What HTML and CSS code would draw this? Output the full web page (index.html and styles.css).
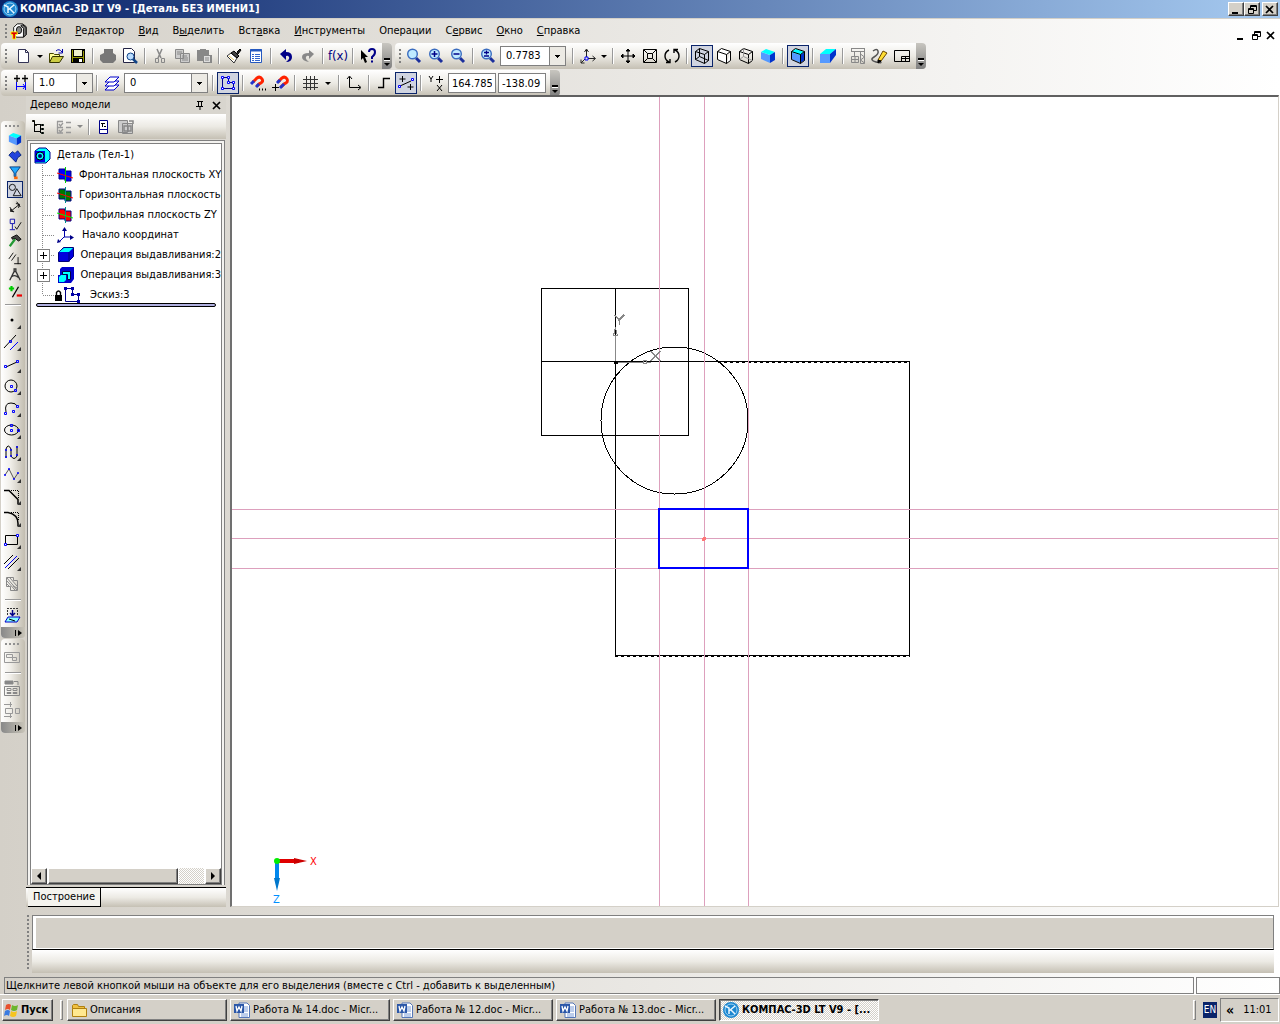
FILE: index.html
```html
<!DOCTYPE html>
<html lang="ru">
<head>
<meta charset="utf-8">
<title>КОМПАС-3D LT V9 - [Деталь БЕЗ ИМЕНИ1]</title>
<link rel="stylesheet" href="styles.css">
</head>
<body>
<svg class="defs" aria-hidden="true">
  <symbol id="kompas" viewBox="0 0 16 16"><circle cx="8" cy="8" r="8" fill="#1c86d0"/><circle cx="8" cy="8" r="6" fill="none" stroke="#9fd4f4"/><path d="M2 4l4 2v6M6 9l6-5M8 8l4 4" fill="none" stroke="#e8f6ff" stroke-width="1.500"/></symbol>
  <symbol id="word" viewBox="0 0 16 16"><path d="M5 1h8l2.500 2.500V15.500H5z" fill="#fff" stroke="#5577b8"/><path d="M10 5h4M10 7h4M10 9h4M7 12h7M7 14h7" stroke="#7a9cd8"/><rect y="2" width="10" height="9" fill="#2b57a8"/><path d="M2 4l1 5 2-4 2 4 1-5" fill="none" stroke="#fff" stroke-width="1.300"/></symbol>
  <symbol id="lens" viewBox="0 0 16 16"><path d="M10 10l4 4" stroke="#1c2f9c" stroke-width="3"/><circle cx="6.500" cy="6" r="4.800" fill="#bfeaff" stroke="#3a6cc0" stroke-width="1.400"/></symbol>
  <symbol id="plane" viewBox="0 0 16 16"><path d="M2 2h6v2h6v10H8v-2H2z" stroke="#008"/></symbol>
  <symbol id="cube" viewBox="0 0 16 16"><path d="M1 4l9 3v8l-9-4z" fill="#59f"/><path d="M1 4l5-3 9 3-5 3z" fill="#0ff"/><path d="M10 7l5-3v8l-5 3z" fill="#03c"/></symbol>
  <symbol id="min" viewBox="0 0 10 9"><path d="M1 7h6v2H1z" fill="#000"/></symbol>
  <symbol id="restore" viewBox="0 0 10 9"><path d="M3.500 3V.5h6v5H7M3 1.500h6M1.500 3.500h5v5h-5zM1 4.500h6" fill="none" stroke="#000"/></symbol>
  <symbol id="close" viewBox="0 0 10 9"><path d="M1 1l7 7M8 1l-7 7" stroke="#000" stroke-width="1.700"/></symbol>
</svg>

<header class="titlebar">
  <svg class="ic"><use href="#kompas"/></svg>
  <h1>КОМПАС-3D LT V9 - [Деталь БЕЗ ИМЕНИ1]</h1>
  <div class="winbtns">
    <button aria-label="Свернуть"><svg><use href="#min"/></svg></button><button aria-label="Восстановить"><svg><use href="#restore"/></svg></button><button class="gap" aria-label="Закрыть"><svg><use href="#close"/></svg></button>
  </div>
</header>

<nav class="menubar">
  <span class="grip"></span>
  <svg class="ic doc" viewBox="0 0 18 18"><path d="M3 5l4-4h6l4 3v9l-3 3H6l-3-4z" fill="#fff" stroke="#000"/><path d="M13 2l4 3v8l-3 3V6l-3-3z" fill="#777" stroke="#000"/><ellipse cx="9" cy="8" rx="3" ry="4" fill="#888" stroke="#000"/><path d="M0 10h7v3H5v5H2v-5H0z" fill="#d00" stroke="#ff0"/></svg>
  <button><u>Ф</u>айл</button><button><u>Р</u>едактор</button><button><u>В</u>ид</button><button>В<u>ы</u>делить</button><button>Вст<u>а</u>вка</button><button><u>И</u>нструменты</button><button>Операции</button><button>С<u>е</u>рвис</button><button><u>О</u>кно</button><button><u>С</u>правка</button>
  <div class="mdibtns">
    <button aria-label="Свернуть окно"><svg><use href="#min"/></svg></button><button aria-label="Восстановить окно"><svg><use href="#restore"/></svg></button><button aria-label="Закрыть окно"><svg><use href="#close"/></svg></button>
  </div>
</nav>

<div class="toolrow">
  <div class="toolbar standard" role="toolbar" aria-label="Стандартная">
    <span class="grip"></span>
    <button class="tb" aria-label="Создать"><svg class="ic" viewBox="0 0 16 16"><path d="M3.500 1.500h7l3 3v10h-10z" fill="#fff" stroke="#335"/><path d="M10.500 1.500v3h3" stroke="#335"/></svg></button>
    <button class="drop" aria-label="Список"></button>
    <button class="tb" aria-label="Открыть"><svg class="ic" viewBox="0 0 16 16"><path d="M1.500 14V5.500h4l1 1h5V9" fill="#ff9" stroke="#440"/><path d="M1.500 14.500l3-6h11l-4 6z" fill="#cc4" stroke="#330"/><path d="M8 3q3-3 6 1M14.500 1v4h-4" stroke="#00a"/></svg></button>
    <button class="tb" aria-label="Сохранить"><svg class="ic px" viewBox="0 0 16 16"><path d="M1 1h14v14H1z" fill="#000"/><path d="M4 2h8v6H4z" fill="#eec"/><path d="M2 2h1v12H2zM13 3h1v11h-1zM3 9h10v1H3z" fill="#990"/><path d="M9 11h3v3H9z" fill="#fff"/></svg></button>
    <i class="sep"></i>
    <button class="tb" aria-label="Печать"><svg class="ic" viewBox="0 0 16 16"><path d="M4 1h9v4l3 2v5l-3 3H3l-3-3V7l4-2z" fill="#777"/></svg></button>
    <button class="tb" aria-label="Предварительный просмотр"><svg class="ic" viewBox="0 0 16 16"><path d="M1.500.5h8l3 3v11h-11z" fill="#fff" stroke="#224"/><circle cx="8.500" cy="8.500" r="3.500" fill="#bdf" stroke="#148"/><path d="M11 11l4 4" stroke="#148" stroke-width="2.500"/></svg></button>
    <i class="sep"></i>
    <button class="tb" aria-label="Вырезать"><svg class="ic" viewBox="0 0 16 16" stroke="#888"><path d="M5 1l4 9M10 1L6 10" stroke-width="1.500"/><path d="M3.500 10.500h3v4h-3zM9.500 10.500h3v4h-3z"/></svg></button>
    <button class="tb" aria-label="Копировать"><svg class="ic" viewBox="0 0 16 16" stroke="#888"><path d="M1.500 1.500h8v9h-8zM6.500 5.500h9v9h-9z" fill="#ccc"/><path d="M3 4h5M3 6h3M8 8h5M8 10h6M8 12h6"/></svg></button>
    <button class="tb" aria-label="Вставить"><svg class="ic" viewBox="0 0 16 16"><path d="M1 2h3V1h6v1h3v5h3v8H7v-2H1z" fill="#888"/><path d="M8 8h6v6H8z" fill="#ddd"/><path d="M9 10h4M9 12h4" stroke="#888"/></svg></button>
    <i class="sep"></i>
    <button class="tb" aria-label="Копировать свойства"><svg class="ic" viewBox="0 0 16 16"><path d="M11 4l3-3 1 1-3 4z" fill="#222" stroke="#000"/><path d="M5 5l6 5-3 5-7-7z" fill="#fff" stroke="#333"/><path d="M8 3l5 5-2 2-6-5z" fill="#444" stroke="#000"/><path d="M3 8l5 4" stroke="#e8c860"/></svg></button>
    <button class="tb" aria-label="Свойства"><svg class="ic" viewBox="0 0 16 16"><path d="M2.500 1.500h11v13h-11z" fill="#fff" stroke="#2458c0"/><path d="M2 2.500h12" stroke="#2458c0" stroke-width="2"/><path d="M4 6.500h2M7 6.500h5M4 8.500h2M7 8.500h5M4 10.500h2M7 10.500h5M4 12.500h2M7 12.500h5" stroke="#36c"/></svg></button>
    <i class="sep"></i>
    <button class="tb" aria-label="Отменить"><svg class="ic" viewBox="0 0 16 16"><path d="M2 6l6-5v3q6 0 6 5t-6 5q4-3 3-5t-3-1v4z" fill="#008"/></svg></button>
    <button class="tb" aria-label="Повторить"><svg class="ic" viewBox="0 0 16 16"><path d="M14 6L9 2v3q-7 0-7 4t7 5q-4-3-3-5t3-1v3z" fill="#888"/></svg></button>
    <i class="sep"></i>
    <button class="tb fx" aria-label="Переменные">f(x)</button>
    <i class="sep"></i>
    <button class="tb" aria-label="Справка"><svg class="ic" viewBox="0 0 16 16"><path d="M1 2l7 7H5l2 5-2 1-2-5-2 2z" fill="#000"/><path d="M9 4q0-3 3-3t3 3-3 5v2M12 12.500v2" stroke="#008" stroke-width="2"/></svg></button>
    <button class="cap" aria-label="Параметры панели"></button>
  </div>
  <div class="toolbar view" role="toolbar" aria-label="Вид">
    <span class="grip"></span>
    <button class="tb" aria-label="Увеличить рамкой"><svg class="ic"><use href="#lens"/></svg></button>
    <button class="tb" aria-label="Увеличить"><svg class="ic" viewBox="0 0 16 16"><use href="#lens"/><path d="M6.500 3v6M3.500 6h6" stroke="#008" stroke-width="1.500"/></svg></button>
    <button class="tb" aria-label="Уменьшить"><svg class="ic" viewBox="0 0 16 16"><use href="#lens"/><path d="M3.500 6h6" stroke="#008" stroke-width="1.500"/></svg></button>
    <i class="sep"></i>
    <button class="tb" aria-label="Масштаб"><svg class="ic" viewBox="0 0 16 16"><use href="#lens"/><path d="M6.500 2.500v4M4 4.500h5M4 8h5" stroke="#008" stroke-width="1.300"/></svg></button>
    <span class="combo zoom"><select aria-label="Текущий масштаб"><option>0.7783</option></select></span>
    <i class="sep"></i>
    <button class="tb" aria-label="Ориентация"><svg class="ic" viewBox="0 0 16 16"><path d="M6.500 9V2M8 10.500h7M5 11l-4 4M4.500 4l2-3 2 3M12.500 8l3 2.500-3 2.500M1 11.500V15h3.500" stroke="#222"/><path d="M5 9h3v3H5z" stroke="#00f"/></svg></button>
    <button class="drop" aria-label="Список ориентаций"></button>
    <i class="sep"></i>
    <button class="tb" aria-label="Сдвинуть"><svg class="ic" viewBox="0 0 16 16" stroke="#000"><path d="M8 2v12M2 8h12"/><path d="M6 3l2-2 2 2zM6 13l2 2 2-2zM3 6L1 8l2 2zM13 6l2 2-2 2z" fill="#000"/></svg></button>
    <button class="tb" aria-label="Показать все"><svg class="ic" viewBox="0 0 16 16" stroke="#000"><path d="M1.500 1.500h13v13h-13zM5.500 5.500h5v5h-5zM2 2l3.500 3.500M14 2l-3.500 3.500M2 14l3.500-3.500M14 14l-3.500-3.500"/></svg></button>
    <button class="tb" aria-label="Повернуть"><svg class="ic" viewBox="0 0 16 16" stroke="#000" stroke-width="1.400"><path d="M5 2Q1 4 1 8t4 6M2 14.500h4V11M11 14q4-2 4-6t-4-6M14 1.500h-4V5"/></svg></button>
    <i class="sep"></i>
    <button class="tb on" aria-label="Каркас"><svg class="ic" viewBox="0 0 16 16" stroke="#000"><path d="M1.500 3.500l9 3v9l-9-4zM1.500 3.500l4-3 9 3-4 3M14.500 3.500v9l-4 3M5.500.5v8l9 4M1.500 11.500l4-3"/></svg></button>
    <button class="tb" aria-label="Без невидимых линий"><svg class="ic" viewBox="0 0 16 16" stroke="#000"><path d="M1.500 3.500l9 3v9l-9-4zM1.500 3.500l4-3 9 3-4 3M14.500 3.500v9l-4 3" fill="#fff"/></svg></button>
    <button class="tb" aria-label="Невидимые линии тонкие"><svg class="ic" viewBox="0 0 16 16" stroke="#000"><path d="M1.500 3.500l9 3v9l-9-4zM1.500 3.500l4-3 9 3-4 3M14.500 3.500v9l-4 3"/><path d="M5.500.5v8l9 4M1.500 11.500l4-3" stroke="#999"/></svg></button>
    <button class="tb" aria-label="Полутоновое"><svg class="ic"><use href="#cube"/></svg></button>
    <i class="sep"></i>
    <button class="tb on" aria-label="Полутоновое с каркасом"><svg class="ic" viewBox="0 0 16 16"><use href="#cube"/><path d="M1.500 3.500l9 3v9l-9-4zM1.500 3.500l4-3 9 3-4 3M14.500 3.500v9l-4 3" stroke="#000"/></svg></button>
    <i class="sep"></i>
    <button class="tb" aria-label="Перспектива"><svg class="ic" viewBox="0 0 16 16"><path d="M0 6h10v9H0z" fill="#59f"/><path d="M0 6l6-5h10l-6 5z" fill="#0ff"/><path d="M10 6l6-5v6l-6 8z" fill="#03c"/></svg></button>
    <i class="sep"></i>
    <button class="tb" aria-label="Библиотека"><svg class="ic" viewBox="0 0 16 16" stroke="#888"><path d="M1 .5h14M1 3.500h14M1.500 1v3M14.500 1v3M4.500 4v4M10.500 4v11.500h4V4M10.500 6l4 3-4 3 4 3M1.500 8.500h7v6h-7zM5 8v6M1 11.500h7"/></svg></button>
    <button class="tb" aria-label="Перестроить"><svg class="ic" viewBox="0 0 16 16"><path d="M1 3q4-3 5 0T2 9t2 5 4-1" stroke="#555" stroke-width="1.500"/><path d="M6 12l5-9 4 2-6 8z" fill="#fd3" stroke="#640"/><path d="M6 12l3 1-3 2z" fill="#000" stroke="#000"/></svg></button>
    <button class="tb" aria-label="Окно"><svg class="ic" viewBox="0 0 16 16" stroke="#000"><path d="M.5 2.500h15v11H.5zM7.500 8.500h8v5h-8zM8 10.500h7M11.500 9v4"/></svg></button>
    <button class="cap" aria-label="Параметры панели"></button>
  </div>
</div>

<div class="toolrow">
  <div class="toolbar second" role="toolbar" aria-label="Текущее состояние">
    <span class="grip"></span>
    <label class="tb" for="step"><svg class="ic" viewBox="0 0 16 16"><path d="M4 0v7M1 3.500h6M12 0v7M9 3.500h6" stroke="#000" stroke-width="1.300"/><path d="M3.500 7v8M12.500 7v8M4 11.500h8M10 9l2 2.500-2 2.500" stroke="#00f"/></svg></label>
    <span class="combo step"><select id="step"><option>1.0</option></select></span>
    <i class="sep"></i>
    <label class="tb" for="layer"><svg class="ic" viewBox="0 0 16 16" stroke="#00c"><path d="M1 15l5-5h9l-5 5z" fill="#fff"/><path d="M1 11l5-5h9l-5 5z" fill="#fff"/><path d="M1 7l5-5h9l-5 5z" fill="#fff"/></svg></label>
    <span class="combo layer"><select id="layer"><option>0</option></select></span>
    <i class="sep"></i>
    <button class="tb on" aria-label="Эскиз"><svg class="ic" viewBox="0 0 16 16"><path d="M2.500 2.500h6v5h5v6h-11z" stroke="#008"/><path d="M1.500 1.500h2v2h-2zM7.500 1.500h2v2h-2zM7.500 6.500h2v2h-2zM12.500 6.500h2v2h-2zM12.500 12.500h2v2h-2zM1.500 12.500h2v2h-2z" stroke="#00f" fill="#fff"/></svg></button>
    <i class="sep"></i>
    <button class="tb" aria-label="Привязки"><svg class="ic" viewBox="0 0 16 16"><path d="M3 7l4-4q3-2 5 1t-3 5l-2 2" stroke="#f20" stroke-width="3"/><path d="M1 9l3-3M6 12l3-3" stroke="#23c" stroke-width="3"/><path d="M9 14.500h1M12 14.500h1M15 14.500h1" stroke="#000" stroke-width="2"/></svg></button>
    <button class="tb" aria-label="Запретить привязки"><svg class="ic" viewBox="0 0 16 16"><path d="M6 7l4-4q3-2 5 1t-3 5l-3 3" stroke="#f20" stroke-width="3"/><path d="M5 8l3-3M8 13l4-4" stroke="#23c" stroke-width="3"/><path d="M3.500 9v7M0 12.500h7" stroke="#000"/></svg></button>
    <i class="sep"></i>
    <button class="tb" aria-label="Сетка"><svg class="ic px" viewBox="0 0 16 16" stroke="#333"><path d="M4.500 1v14M8.500 1v14M12.500 1v14M1 4.500h15M1 8.500h15M1 12.500h15"/></svg></button>
    <button class="drop" aria-label="Настройка сетки"></button>
    <i class="sep"></i>
    <button class="tb" aria-label="Локальная СК"><svg class="ic" viewBox="0 0 16 16" stroke="#000"><path d="M3.500 2v10.500H14M1 4l2.500-3L6 4M12 10l3 2.500-3 2.500"/></svg></button>
    <i class="sep"></i>
    <button class="tb" aria-label="Ортогональное черчение"><svg class="ic" viewBox="0 0 16 16" stroke="#000"><path d="M2 12.500h5.500v-9H14" stroke-width="1.400"/></svg></button>
    <button class="tb on" aria-label="Округление"><svg class="ic" viewBox="0 0 16 16"><path d="M4.500 1v6M1.500 4h6M12.500 9v6M9.500 12h6M2 11l11-5" stroke="#000"/><path d="M.5 10.500h2v2h-2zM13.500 3.500h2v2h-2z" stroke="#00f" fill="#fff"/></svg></button>
    <i class="sep"></i>
    <span class="tb"><svg class="ic" viewBox="0 0 16 16" stroke="#000"><path d="M1 1l2 3 2-3M3 4v3M11.500 1v7M8 4.500h7M9 10l5 6M14 10l-5 6"/></svg></span>
    <input class="coord" aria-label="Координата X" value="164.785"><input class="coord" aria-label="Координата Y" value="-138.09">
    <button class="cap" aria-label="Параметры панели"></button>
  </div>
</div>

<main class="work">
  <aside class="rail" aria-label="Компактная панель">
    <div class="strip">
      <span class="hgrip"></span>
      <div class="modes">
        <button aria-label="Деталь"><svg class="ic"><use href="#cube"/></svg></button>
        <button aria-label="Поверхности"><svg class="ic" viewBox="0 0 16 16"><path d="M1 7l4-4 3 2 3-3 4 5-4 3-2 5-4-4z" fill="#24d" stroke="#027"/></svg></button>
        <button aria-label="Фильтры"><svg class="ic" viewBox="0 0 16 16"><path d="M2 1h12L9 8v4H7V8z" fill="#2af" stroke="#037"/><path d="M7 12h4v3H7z" fill="#f60"/></svg></button>
        <button class="on" aria-label="Геометрия"><svg class="ic" viewBox="0 0 16 16" stroke="#000"><circle cx="5" cy="5" r="3.500"/><path d="M6 14.500l4-8 5 8z"/></svg></button>
        <button aria-label="Размеры"><svg class="ic" viewBox="0 0 16 16" stroke="#000"><path d="M3 13L13 5M2 8l4 6M10 2l4 6M3 10v3h4M9 4l4 1-1 4"/></svg></button>
        <button aria-label="Обозначения"><svg class="ic" viewBox="0 0 16 16"><path d="M2.500 2.500h5v5h-5zM5 8v6M2 14.500h6" stroke="#00a"/><path d="M8 11l2 3 5-8" stroke="#000"/></svg></button>
        <button aria-label="Редактирование"><svg class="ic" viewBox="0 0 16 16"><path d="M4 4l6-3 5 5-3 2-4-3-3 1z" fill="#444" stroke="#000"/><path d="M8 6l-6 8" stroke="#293" stroke-width="2.500"/></svg></button>
        <button aria-label="Параметризация"><svg class="ic" viewBox="0 0 16 16" stroke="#000"><path d="M1 9l5-7M4 11l5-7M7 14.500h8M11.500 7v8"/></svg></button>
        <button aria-label="Измерения"><svg class="ic" viewBox="0 0 16 16" stroke="#333" stroke-width="1.500"><path d="M2 14l5-10h2l5 10M7 4V1h2v3M4 10q4-3 8 1"/></svg></button>
        <button aria-label="Выделение"><svg class="ic" viewBox="0 0 16 16"><path d="M4 1v6M1 4h6" stroke="#0c0" stroke-width="2.500"/><path d="M12 2L5 14" stroke="#000" stroke-width="1.500"/><path d="M10 12h6" stroke="#e00" stroke-width="2.500"/></svg></button>
      </div>
      <i class="hsep"></i>
      <div class="tools">
        <button class="more" aria-label="Точка"><svg class="ic" viewBox="0 0 16 16"><circle cx="8" cy="8" r="1.500" fill="#000"/></svg></button>
        <button class="more" aria-label="Вспомогательная прямая"><svg class="ic" viewBox="0 0 16 16"><path d="M0 14L12 1" stroke="#000"/><path d="M6 16l8-8M5.500 6.500h2v2h-2z" stroke="#00f"/></svg></button>
        <button class="more" aria-label="Отрезок"><svg class="ic" viewBox="0 0 16 16"><path d="M2 11l11-5" stroke="#000"/><path d="M.5 9.500h2v2h-2zM12.500 4.500h2v2h-2z" stroke="#00f"/></svg></button>
        <button class="more" aria-label="Окружность"><svg class="ic" viewBox="0 0 16 16"><circle cx="7" cy="8" r="6" stroke="#000"/><path d="M6.500 7.500h2v2h-2zM10.500 11.500h2v2h-2z" stroke="#00f"/></svg></button>
        <button class="more" aria-label="Дуга"><svg class="ic" viewBox="0 0 16 16"><path d="M2 12Q0 3 7 3q5 0 6 3" stroke="#000"/><path d="M.5 12.500h2v2h-2zM8.500 10.500h2v2h-2zM12.500 5.500h2v2h-2z" stroke="#00f"/></svg></button>
        <button class="more" aria-label="Эллипс"><svg class="ic" viewBox="0 0 16 16"><ellipse cx="7.500" cy="8" rx="7" ry="5" stroke="#000"/><path d="M6.500 2.500h2v2h-2zM6.500 7.500h2v2h-2zM13.500 7.500h2v2h-2z" stroke="#00f"/></svg></button>
        <button class="more" aria-label="Непрерывный ввод"><svg class="ic" viewBox="0 0 16 16"><path d="M2 14V5q2-6 5 0v7q3 5 6 0V2" stroke="#000"/><path d="M1.500 5.500h1v1h-1zM1.500 12.500h1v1h-1zM6.500 5.500h1v1h-1zM6.500 11.500h1v1h-1zM12.500 2.500h1v1h-1zM12.500 10.500h1v1h-1z" stroke="#00f"/></svg></button>
        <button class="more" aria-label="Кривая"><svg class="ic" viewBox="0 0 16 16"><path d="M1 9l4-6 5 10 4-6" stroke="#555"/><path d="M.5 8.500h1v1h-1zM4.500 2.500h1v1h-1zM9.500 12.500h1v1h-1zM13.500 6.500h1v1h-1z" stroke="#00f"/></svg></button>
        <button class="more" aria-label="Фаска"><svg class="ic" viewBox="0 0 16 16"><path d="M0 2.500h5l9 9V16" stroke="#000" stroke-width="1.500"/><path d="M7 2.500h7.500V10" stroke="#000" stroke-dasharray="1 1"/></svg></button>
        <button class="more" aria-label="Скругление"><svg class="ic" viewBox="0 0 16 16"><path d="M0 2.500h4q10 2 10 11V16" stroke="#000" stroke-width="1.500"/><path d="M7 2.500h7.500V10" stroke="#000" stroke-dasharray="1 1"/></svg></button>
        <button class="more" aria-label="Прямоугольник"><svg class="ic" viewBox="0 0 16 16"><path d="M1.500 3.500h12v9h-12z" stroke="#000"/><path d="M.5 11.500h2v2h-2zM12.500 2.500h2v2h-2z" stroke="#00f" fill="#fff"/></svg></button>
        <button class="more" aria-label="Штриховка линиями"><svg class="ic" viewBox="0 0 16 16"><path d="M0 10l9-9M4 15L15 4" stroke="#000"/><path d="M1 14L13 2" stroke="#00f"/></svg></button>
        <button aria-label="Штриховка"><svg class="ic" viewBox="0 0 16 16" stroke="#888"><path d="M2.500 1.500h7v3h4v10h-7v-4h-4zM3 2l10 12M3 5l8 9M6 2l7 8M3 8l3 3M9 10l4 2"/></svg></button>
        <i class="hsep"></i>
        <button aria-label="Спроецировать объект"><svg class="ic" viewBox="0 0 16 16"><path d="M3 1.500h11M3.500 3v5M13.500 3v5" stroke="#333" stroke-dasharray="2 1"/><path d="M8.500 3v5M6 6l2.500 2.500L11 6" stroke="#008" stroke-width="1.500"/><path d="M1 15l3-5h12l-3 5z" fill="#8ff" stroke="#00c"/><path d="M5 12l6 2" stroke="#000"/></svg></button>
      </div>
      <button class="hcap" aria-label="Развернуть панель"></button>
    </div>
    <div class="strip">
      <span class="hgrip"></span>
      <div class="tools">
        <button aria-label="Вид"><svg class="ic" viewBox="0 0 16 16" stroke="#999"><path d="M.5 3.500h15v10H.5zM2.500 5.500h6v3h-6zM8.500 8.500h4v3h-4z"/></svg></button>
        <i class="hsep"></i>
        <button aria-label="Спецификация"><svg class="ic" viewBox="0 0 16 16" stroke="#888"><path d="M1 1h8v3H1z" fill="#888"/><path d="M10 1.500h4V5M.5 6.500h15v9H.5zM3 8.500h4v2H3zM9 8.500h4v2H9zM3 12.500h4v1H3zM9 12.500h4v1H9z"/></svg></button>
        <button aria-label="Размещение"><svg class="ic" viewBox="0 0 16 16" stroke="#999"><path d="M0 2.500h8M6.500 0v5M1.500 6.500h7v5h-7zM11.500 6.500h4v5h-4zM0 14.500h8M6.500 12v4"/></svg></button>
      </div>
      <button class="hcap" aria-label="Развернуть панель"></button>
    </div>
  </aside>

  <section class="panel">
    <header class="panelhead"><h2>Дерево модели</h2>
      <button aria-label="Закрепить"><svg viewBox="0 0 10 9"><path d="M2 .5h6M3.500 0v5M6.500 0v5M1 5.500h7M5 5v4" fill="none" stroke="#000"/><path d="M6 0h1v5H6z"/></svg></button><button aria-label="Закрыть панель"><svg><use href="#close"/></svg></button>
    </header>
    <div class="paneltools">
      <button class="tb" aria-label="Структура"><svg class="ic" viewBox="0 0 16 16" stroke="#000"><path d="M3.500 2v11M4 5.500h5M4 12.500h5M9.500 5v9"/><path d="M1.500 1.500h2v1h-2zM4.500 5.500h1v1h-1z" fill="#cc0"/><path d="M10.500 5.500h2v1h-2zM10.500 9.500h2v1h-2zM10.500 13.500h2v1h-2z" fill="#0c9"/></svg></button>
      <button class="tb" aria-label="Состав"><svg class="ic" viewBox="0 0 16 16" stroke="#999"><path d="M1 2.500h6M1.500 2v12M1 8.500h6M1 14h6M3 5l1.500 2L7 4M3 11l1.500 2L7 10M10 3.500h5M10 8.500h5M10 13.500h5" stroke-width="1.300"/></svg></button>
      <button class="drop dim" aria-label="Список состава"></button>
      <i class="sep"></i>
      <button class="tb" aria-label="Отношения"><svg class="ic" viewBox="0 0 16 16"><path d="M3.500 1.500h8v13h-8zM3 10.500h9" fill="#fff" stroke="#008"/><path d="M5 4.500h4M6.500 4v4M8 7.500h2" stroke="#000"/></svg></button>
      <button class="tb" aria-label="Дополнительное окно"><svg class="ic" viewBox="0 0 16 16" stroke="#888"><path d="M.5 1.500h9v12h-9zM4.500 4.500h10v10h-10z" fill="#ccc"/><path d="M6 7h7v5H6zM10 7v6M11 2h4v3" stroke-width="1.500"/></svg></button>
    </div>
    <div class="treebox">
      <ul class="tree">
        <li class="root"><svg class="ic" viewBox="0 0 16 16"><path d="M1 4l4-3h7l4 4v7l-4 4H1z" fill="#0ff" stroke="#008"/><path d="M1 4h10v11H1z" fill="#00d"/><circle cx="6" cy="9" r="4" fill="#0ff" stroke="#000"/><circle cx="6" cy="9" r="2" fill="#007"/></svg><span>Деталь (Тел-1)</span></li>
        <li><svg class="ic" viewBox="0 0 16 16"><use href="#plane" fill="#00f"/><path d="M8.500 0v16" stroke="#0c0"/><path d="M0 6l16 5" stroke="#f00"/></svg><span>Фронтальная плоскость XY</span></li>
        <li><svg class="ic" viewBox="0 0 16 16"><use href="#plane" fill="#070"/><path d="M8.500 0v16" stroke="#088"/><path d="M0 6l16 5" stroke="#f00"/></svg><span>Горизонтальная плоскость</span></li>
        <li><svg class="ic" viewBox="0 0 16 16"><use href="#plane" fill="#f00"/><path d="M8.500 0v16" stroke="#088"/><path d="M0 6l16 5" stroke="#0e0"/></svg><span>Профильная плоскость ZY</span></li>
        <li><svg class="ic" viewBox="0 0 16 16"><path d="M7.500 10V2M7 10h7M7 10l-5 5" stroke="#00a"/><path d="M5 4l2.500-4L10 4zM13 8l4 2.500-4 2.500zM0 16l1-4 3 3z" fill="#008"/></svg><span class="in">Начало координат</span></li>
        <li class="node"><svg class="ic" viewBox="0 0 16 16"><path d="M.5 5.500l5-5h10v9l-5 5H.5z" fill="#00d" stroke="#007"/><path d="M1 5l5-4h9l-4 4z" fill="#0ff"/><path d="M11 5v10" stroke="#007"/></svg><span>Операция выдавливания:2</span></li>
        <li class="node"><svg class="ic" viewBox="0 0 16 16"><path d="M2 2l2-2h12v12l-3 4H0V8h2z" fill="#00c"/><path d="M4.500 4.500h8v8h-3v-5h-5z" fill="#0ff" stroke="#004"/><path d="M1 10l2-2h5v5l-2 2H1z" fill="#0ff"/></svg><span>Операция выдавливания:3</span></li>
        <li class="last"><svg class="lock" viewBox="0 0 7 11"><path d="M1.500 5V2.500q2-3 4 0V5" fill="none" stroke="#000" stroke-width="1.400"/><path d="M0 5h7v6H0z"/></svg><svg class="ic" viewBox="0 0 16 16" stroke="#008"><path d="M1.500 1.500h7v6h6v7h-13z"/><path d="M0 0h3v3H0zM7 0h3v3H7zM7 6h3v3H7zM13 6h3v3h-3zM13 13h3v3h-3z" fill="#00a" stroke="none"/></svg><span class="far">Эскиз:3</span></li>
      </ul>
      <div class="treerest"><div class="endbar"></div></div>
      <div class="hscroll"><button class="left" aria-label="Влево"></button><span class="thumb"></span><span class="track"></span><button class="right" aria-label="Вправо"></button></div>
    </div>
    <div class="tabs"><button>Построение</button></div>
  </section>

  <section class="canvas" aria-label="Окно модели">
    <svg class="drawing px">
      <g transform="translate(-232 -97)" fill="none">
        <path d="M541.500 288.500h147v147h-147zM615.500 288v368M541 361.500h368.500V655.500H615" stroke="#000"/>
        <path d="M718 362.500h192M615 656.500h295" stroke="#000" stroke-dasharray="3 3"/>
        <circle cx="674.500" cy="420.500" r="73.500" stroke="#000"/>
        <g stroke="#dda0bd">
          <line x1="232" x2="200%" y1="509.500" y2="509.500"/><line x1="232" x2="200%" y1="538.500" y2="538.500"/><line x1="232" x2="200%" y1="568.500" y2="568.500"/>
          <line y1="97" y2="200%" x1="659.500" x2="659.500"/><line y1="97" y2="200%" x1="704.500" x2="704.500"/><line y1="97" y2="200%" x1="748.500" x2="748.500"/>
        </g>
        <rect x="659" y="509" width="89" height="59" stroke="#00f" stroke-width="2"/>
        <circle cx="704" cy="539" r="2" fill="#f77"/>
        <path d="M615.500 362v-27M613.500 335.500l2-8 2 8zM616 362.500h28M643.500 360.500h3v3h-3zM646 362.500h5" stroke="#888"/>
        <path d="M615 315l4 5 5-5M619.500 320v5M651 351l9 10M660 351l-9 10" stroke="#888" stroke-width="1.500"/>
        <path d="M614 361h4v3h-4z" fill="#000"/>
      </g>
    </svg>
    <svg class="triad" viewBox="0 0 50 52"><path d="M5 6h22" stroke="#e00000" stroke-width="4"/><path d="M22 3l13 3-13 3z" fill="#c00"/><path d="M5 6v20" stroke="#08e" stroke-width="4"/><path d="M2 23l3 13 3-13z" fill="#07c"/><circle cx="5" cy="6" r="3" fill="#0e0"/><text x="38" y="10" fill="#f00">X</text><text x="1" y="48" fill="#0090ff">Z</text></svg>
  </section>
</main>

<section class="props" aria-label="Панель свойств">
  <span class="vgrip"></span>
  <div class="propbody"><div class="propbox"></div><div class="proptabs"></div></div>
</section>

<footer class="status"><div class="msg">Щелкните левой кнопкой мыши на объекте для его выделения (вместе с Ctrl - добавить к выделенным)</div><div class="cell"></div></footer>

<nav class="taskbar">
  <button class="start"><svg class="ic" viewBox="0 0 16 16"><path d="M2 3q3-2 5 0L6 8Q4 6 1 8z" fill="#e8502c"/><path d="M8 3q3 2 6 0l-1 5q-3 2-6 0z" fill="#6cb52c"/><path d="M1 9q3-2 5 0l-1 5q-2-2-5 0z" fill="#3a7be0"/><path d="M7 9q3 2 6 0l-1 5q-3 2-6 0z" fill="#f5c420"/></svg>Пуск</button>
  <i class="bar"></i>
  <div class="tasks">
    <button><svg class="ic" viewBox="0 0 16 16"><path d="M1.500 13.500v-10l1-1h4l1 2h6v9z" fill="#f0c040" stroke="#b08010"/><path d="M1.500 14.500v-8h14v8z" fill="#ffe890" stroke="#b08010"/></svg><span>Описания</span></button>
    <button><svg class="ic"><use href="#word"/></svg><span>Работа № 14.doc - Micr...</span></button>
    <button><svg class="ic"><use href="#word"/></svg><span>Работа № 12.doc - Micr...</span></button>
    <button><svg class="ic"><use href="#word"/></svg><span>Работа № 13.doc - Micr...</span></button>
    <button class="active"><svg class="ic"><use href="#kompas"/></svg><span>КОМПАС-3D LT V9 - [...</span></button>
  </div>
  <i class="bar"></i>
  <button class="lang">EN</button>
  <div class="tray"><button aria-label="Показать значки">«</button><time>11:01</time></div>
</nav>
</body>
</html>
```
FILE: styles.css
```css
* { box-sizing: border-box; }
body {
  margin: 0; min-height: 100vh; display: flex; flex-direction: column; overflow: hidden;
  font: 11px/14px "DejaVu Sans Condensed", "Noto Sans", sans-serif; color: #000;
  background: linear-gradient(90deg, #d4d0c8, #fff);
}
button { font: inherit; color: inherit; background: none; border: 0; padding: 0; margin: 0; flex: none; }
h1, h2 { margin: 0; font-size: inherit; font-weight: normal; }
ul { margin: 0; padding: 0; list-style: none; }
svg { display: block; flex: none; }
.defs { position: absolute; width: 0; height: 0; }
.ic { width: 16px; height: 16px; fill: none; overflow: visible; }
.px { shape-rendering: crispEdges; }

.titlebar { display: flex; align-items: center; height: 19px; padding: 0 2px; gap: 2px; background: linear-gradient(90deg, #0a246a, #a6caf0); border-bottom: 1px solid #d4d0c8; color: #fff; }
.titlebar h1 { flex: 1; font-weight: bold; }
.winbtns { display: flex; }
.winbtns button { width: 16px; height: 14px; display: grid; place-items: center; background: #d4d0c8; border: 1px solid; border-color: #fff #404040 #404040 #fff; box-shadow: inset -1px -1px #808080; }
.winbtns .gap { margin-left: 2px; }
.winbtns svg, .mdibtns svg, .panelhead svg { width: 10px; height: 9px; }

.menubar { display: flex; align-items: center; height: 24px; padding-left: 5px; }
.menubar > button { padding: 0 7px; }
.grip { width: 2px; height: 14px; flex: none; background: repeating-linear-gradient(#808080 0 2px, transparent 2px 4px); }
.menubar .grip { margin: 0 4px 0 0; }
.menubar .doc { width: 16px; height: 18px; }
.mdibtns { display: flex; gap: 5px; margin-left: auto; padding: 8px 4px 0 0; }

.toolrow { display: flex; gap: 3px; height: 27px; padding: 0 1px; }
.toolrow + .toolrow { height: 26px; }
.toolbar { display: flex; align-items: center; height: 26px; border-radius: 4px; background: linear-gradient(#fff, #eceae4 50%, #c5c0b4); }
.toolbar .grip { margin: 0 5px 0 4px; }
.toolbar.view .grip { margin-right: 2px; }
.toolbar.second .grip { margin-right: 3px; }
.tb { width: 22px; height: 22px; flex: none; display: grid; place-items: center; }
.on { background: #d0d4e0; border: 1px solid #0a246a; }
.drop { width: 10px; height: 22px; display: grid; place-items: center; }
.standard .drop { width: 11px; }
.second .drop { width: 14px; }
.drop::before { content: ""; border: 3px solid transparent; border-top-color: #000; border-bottom: 0; }
.dim::before { border-top-color: #888; }
.sep { width: 8px; height: 16px; flex: none; background: linear-gradient(90deg, transparent 3px, #999 3px 4px, #fff 4px 5px, transparent 5px); }
.fx { font-size: 13px; color: #000080; }
.cap { align-self: stretch; width: 10px; margin-left: 3px; display: flex; flex-direction: column; justify-content: flex-end; align-items: center; gap: 2px; padding-bottom: 3px; border-radius: 0 4px 4px 0; background: linear-gradient(#c8c6c0, #808080); }
.cap::before { content: ""; width: 6px; height: 2px; background: #000; border-bottom: 1px solid #fff; }
.cap::after { content: ""; border: 3px solid transparent; border-top-color: #000; border-bottom: 0; }
.combo { display: flex; height: 20px; margin-left: 1px; position: relative; border: 1px solid #808080; background: #fff; }
.combo select { width: 100%; appearance: none; border: 0; background: none; font: inherit; padding: 0 5px; border-radius: 0; color: #000; }
.combo::after { content: ""; position: absolute; inset: 0 0 0 auto; width: 15px; border-left: 1px solid #808080; pointer-events: none; background: linear-gradient(#000, #000) center 8px/5px 1px no-repeat, linear-gradient(#000, #000) center 9px/3px 1px no-repeat, linear-gradient(#000, #000) center 10px/1px 1px no-repeat, #eceae4; }
.zoom { width: 66px; margin-right: 3px; }
.step { width: 60px; }
.layer { width: 84px; margin-right: 1px; }
.coord { width: 48px; height: 20px; margin: 0 1px; padding: 0 3px; border: 1px solid #808080; font: inherit; }

.work { flex: 1; display: flex; min-height: 0; }
.rail { width: 26px; flex: none; padding: 25px 1px 0; }
.strip { border-radius: 4px; background: linear-gradient(90deg, #fff, #f0eee8 40%, #c2bdb0); padding-top: 4px; }
.strip + .strip { margin-top: 1px; }
.hgrip { display: block; width: 16px; height: 2px; margin-left: 4px; background: repeating-linear-gradient(90deg, #909090 0 2px, transparent 2px 4px); }
.strip button { display: grid; place-items: center; }
.modes { padding: 3px 0 0 6px; display: grid; }
.modes button { width: 16px; height: 17px; }
.modes .ic { width: 14px; height: 14px; }
.tools { display: grid; padding-bottom: 1px; }
.tools button { width: 22px; height: 22px; position: relative; }
.strip + .strip .tools { padding-top: 1px; }
.more::after { content: ""; position: absolute; right: 2px; bottom: 2px; border: 2px solid #333; border-left-color: transparent; border-top-color: transparent; }
.hsep { display: block; width: 16px; height: 2px; margin: 4px 4px 3px; background: #999; border-bottom: 1px solid #fff; }
.strip .hcap { width: 24px; height: 11px; display: flex; justify-content: flex-end; align-items: center; gap: 2px; padding-right: 3px; background: linear-gradient(90deg, #888, #c8c4b8); border-radius: 0 0 4px 4px; }
.hcap::before { content: ""; width: 1px; height: 6px; background: #000; }
.hcap::after { content: ""; border: 3px solid transparent; border-left: 4px solid #000; border-right: 0; }

.panel { width: 200px; flex: none; display: flex; flex-direction: column; }
.panelhead { display: flex; align-items: center; height: 18px; gap: 7px; padding: 0 4px; background: #d8d5ce; }
.panelhead h2 { flex: 1; }
.paneltools { display: flex; align-items: center; height: 25px; padding-left: 2px; background: linear-gradient(#fff, #eceae4 50%, #c5c0b4); }
.paneltools .tb + .tb { margin-left: 3px; }
.paneltools .tb + .tb:last-child { margin-left: 0; }
.treebox { flex: 1; margin: 1px 1px 2px; border: 1px solid #808080; border-bottom: 0; padding: 2px 2px 0; background: #f4f3f0; display: flex; flex-direction: column; min-height: 0; }
.tree { background: #fff; border: 1px solid #808080; border-bottom: 0; padding-top: 1px; overflow: hidden; }
.tree li { display: flex; align-items: center; height: 20px; padding-left: 26px; white-space: nowrap; gap: 6px; background: repeating-linear-gradient(#888 0 1px, transparent 1px 2px) 11px 0/1px 100% no-repeat, repeating-linear-gradient(90deg, #888 0 1px, transparent 1px 2px) 12px 10px/12px 1px no-repeat; }
.tree .root { padding-left: 3px; gap: 7px; background: none; }
.tree .in { padding-left: 3px; }
.tree .node { padding-left: 6px; gap: 0; }
.tree .node::before { content: ""; width: 11px; height: 11px; margin-right: 8px; border: 1px solid #808080; background: linear-gradient(#000, #000) center/7px 1px no-repeat, linear-gradient(#000, #000) center/1px 7px no-repeat, #fff; }
.tree .node span { padding-left: 7px; }
.tree .last { padding-left: 24px; gap: 2px; background: repeating-linear-gradient(#888 0 1px, transparent 1px 2px) 11px 0/1px 10px no-repeat, repeating-linear-gradient(90deg, #888 0 1px, transparent 1px 2px) 12px 10px/12px 1px no-repeat; }
.lock { width: 7px; height: 11px; }
.far { padding-left: 8px; }
.treerest { flex: 1; background: #fff; border: 1px solid #808080; border-width: 0 1px; padding: 0 5px; margin-top: -2px; }
.endbar { height: 4px; border: 1px solid #000; border-radius: 2px; background: #b0b0e0; }
.hscroll { display: flex; gap: 1px; background: #fff; border: 1px solid #808080; border-top: 0; }
.hscroll > * { height: 16px; }
.hscroll button, .thumb { background: #d4d0c8; border: 1px solid; border-color: #fff #404040 #404040 #fff; box-shadow: inset -1px -1px #808080; }
.hscroll button { width: 16px; display: grid; place-items: center; }
.left::before { content: ""; border: 4px solid transparent; border-right-color: #000; border-left: 0; }
.right::before { content: ""; border: 4px solid transparent; border-left-color: #000; border-right: 0; }
.thumb { width: 130px; }
.track { flex: 1; background: repeating-conic-gradient(#d4d0c8 0 25%, #fff 0 50%) 0 0/2px 2px; }
.tabs { display: flex; height: 20px; padding-left: 2px; border-top: 1px solid #000; background: linear-gradient(#fff, #eceae4 50%, #c5c0b4); }
.tabs button { height: 19px; padding: 0 5px; background: #f4f3ee; border: 1px solid #000; border-width: 0 1px 1px 0; }

.canvas { flex: 1; position: relative; min-width: 0; margin: -1px 1px 0 4px; background: #fff; border: 2px solid #404040; border-width: 2px 1px 1px 2px; border-color: #606060 #d4d0c8 #d4d0c8 #707070; overflow: hidden; }
.drawing { position: absolute; inset: 0; width: 100%; height: 100%; overflow: hidden; }
.triad { position: absolute; left: 40px; bottom: -1px; width: 50px; height: 52px; font: 11px "DejaVu Sans Condensed", sans-serif; }

.props { display: flex; height: 66px; padding: 8px 6px 0 27px; gap: 3px; }
.vgrip { width: 2px; height: 55px; background: repeating-linear-gradient(#808080 0 2px, transparent 2px 4px); }
.propbody { flex: 1; }
.propbox { height: 35px; background: #d4d0c8; border: 1px solid #808080; border-bottom-color: #000; box-shadow: inset 3px 2px #fff, inset 0 -1px #fff; }
.proptabs { height: 23px; background: linear-gradient(#fff, #eceae4 50%, #c5c0b4); }

.status { display: flex; gap: 2px; height: 21px; padding: 4px 0 0 4px; }
.status > div { height: 17px; border: 1px solid #808080; padding: 0 1px; line-height: 15px; white-space: nowrap; }
.msg { flex: 1; }
.cell { width: 84px; }

.taskbar { display: flex; align-items: center; height: 30px; padding: 0 1px 0 2px; background: #d4d0c8; border-top: 1px solid #fff; }
.taskbar button { display: flex; align-items: center; }
.start, .tasks button { height: 22px; border: 1px solid; border-color: #fff #404040 #404040 #fff; box-shadow: inset -1px -1px #808080; }
.taskbar .start { width: 51px; padding-left: 1px; gap: 1px; font-weight: bold; }
.bar { width: 3px; height: 20px; margin: 0 4px 0 7px; border: 1px solid; border-color: #fff #808080 #808080 #fff; flex: none; }
.tasks { flex: 1; display: flex; gap: 3px; }
.tasks button { width: 160px; padding: 0 3px; gap: 3px; }
.tasks span { overflow: hidden; white-space: nowrap; }
.tasks .active { font-weight: bold; border-color: #404040 #fff #fff #404040; box-shadow: inset 1px 1px #808080; background: repeating-conic-gradient(#d4d0c8 0 25%, #fff 0 50%) 0 0/2px 2px; }
.taskbar .lang { width: 14px; height: 16px; margin: 0 3px; justify-content: center; background: #0a246a; color: #fff; font-size: 10px; }
.tray { display: flex; align-items: center; gap: 9px; height: 24px; width: 59px; padding-left: 5px; border: 1px solid; border-color: #808080 #fff #fff #808080; }
.tray button { font-size: 14px; font-weight: bold; }
```
